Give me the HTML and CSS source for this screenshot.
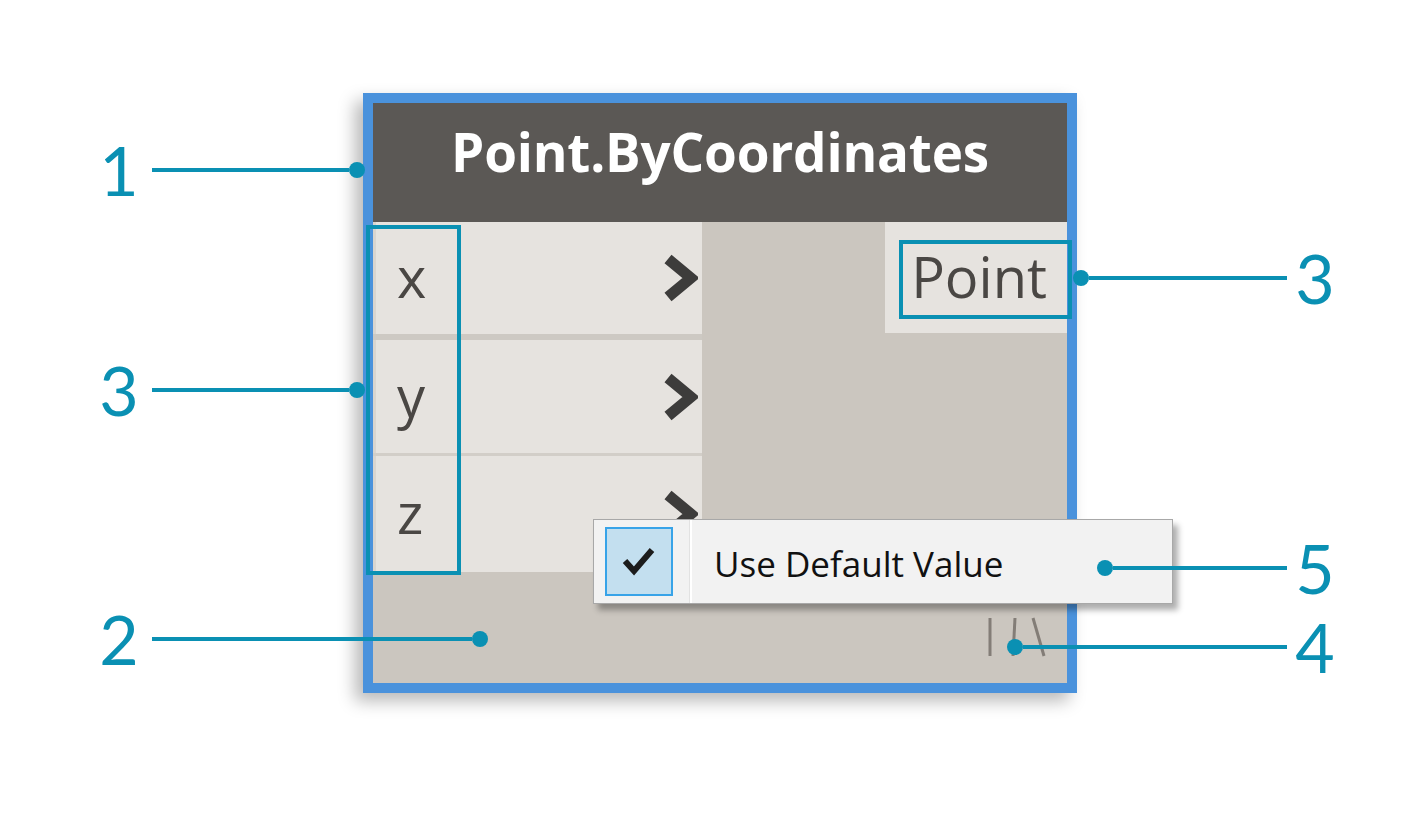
FILE: index.html
```html
<!DOCTYPE html>
<html>
<head>
<meta charset="utf-8">
<link rel="stylesheet" href="styles.css">
</head>
<body>
<div class="stage">
  <div class="node">
    <div class="node-header">Point.ByCoordinates</div>
    <div class="node-body">
      <div class="inputs">
        <div class="port in row-x"><span class="pname">x</span><svg class="chev" viewBox="0 0 36 48" width="36" height="48"><polyline points="6,5 29,24 6,43"/></svg></div>
        <div class="sep thick"></div>
        <div class="port in row-y"><span class="pname">y</span><svg class="chev" viewBox="0 0 36 48" width="36" height="48"><polyline points="6,5 29,24 6,43"/></svg></div>
        <div class="sep thin"></div>
        <div class="port in row-z"><span class="pname">z</span><svg class="chev" viewBox="0 0 36 48" width="36" height="48"><polyline points="6,5 29,24 6,43"/></svg></div>
      </div>
      <div class="outputs">
        <div class="port out"><span class="pname">Point</span></div>
      </div>
    </div>
    <div class="node-footer">
      <svg class="lacing" viewBox="0 0 64 44" width="64" height="44">
        <line x1="6" y1="2" x2="6" y2="40"/>
        <line x1="31" y1="2" x2="29" y2="40"/>
        <line x1="49" y1="2" x2="60" y2="40"/>
      </svg>
    </div>
  </div>

  <div class="menu">
    <div class="check">
      <svg viewBox="0 0 34 30" width="34" height="30"><polyline points="3,14 12,24 30,3"/></svg>
    </div>
    <div class="menu-sep"></div>
    <div class="menu-label">Use Default Value</div>
  </div>

  <div class="hl hl-inputs"></div>
  <div class="hl hl-output"></div>

  <div class="callout left c1"><span class="num">1</span><span class="line"></span><span class="dot"></span></div>
  <div class="callout left c3l"><span class="num">3</span><span class="line"></span><span class="dot"></span></div>
  <div class="callout left c2"><span class="num">2</span><span class="line"></span><span class="dot"></span></div>
  <div class="callout right c3r"><span class="dot"></span><span class="line"></span><span class="num">3</span></div>
  <div class="callout right c5"><span class="dot"></span><span class="line"></span><span class="num">5</span></div>
  <div class="callout right c4"><span class="dot"></span><span class="line"></span><span class="num">4</span></div>
</div>
</body>
</html>
```

FILE: styles.css
```css
html, body {
  margin: 0;
  padding: 0;
  background: #ffffff;
}

.stage {
  position: relative;
  width: 1428px;
  height: 820px;
  padding: 93px 0 0 363px;
  box-sizing: border-box;
  overflow: hidden;
  font-family: "Open Sans", "Noto Sans", sans-serif;
}

/* ---------- node ---------- */
.node {
  width: 714px;
  height: 600px;
  box-sizing: border-box;
  border: 10px solid #4a92dc;
  display: flex;
  flex-direction: column;
  background: #cbc6bf;
  box-shadow: -8px 8px 16px rgba(0, 0, 0, 0.28);
}

.node-header {
  height: 119px;
  flex: none;
  background: #5b5855;
  color: #ffffff;
  font-weight: 700;
  font-size: 53px;
  line-height: 97px;
  text-align: center;
  letter-spacing: -0.2px;
}

.node-body {
  height: 350px;
  flex: none;
  display: flex;
}

.inputs {
  width: 329px;
  display: flex;
  flex-direction: column;
}

.port {
  display: flex;
  align-items: center;
  color: #4a4744;
  font-size: 56px;
  box-sizing: border-box;
  background: #e6e3df;
}

.port.in {
  justify-content: space-between;
  padding: 0 4px 4px 21px;
  border-left: 3px solid #d9d5cf;
}

.row-x { height: 112px; }
.row-y { height: 113px; }
.row-z { height: 116px; }

.sep.thick { height: 6px; background: #cdc9c3; }
.sep.thin { height: 3px; background: #d2cec8; }

.chev {
  display: block;
  margin-top: 4px;
}
.chev polyline {
  fill: none;
  stroke: #3d3c3b;
  stroke-width: 11;
  stroke-linejoin: miter;
}

.outputs {
  flex: 1;
  display: flex;
  flex-direction: column;
  align-items: flex-end;
}

.port.out {
  width: 182px;
  height: 111px;
  justify-content: flex-end;
  padding: 0 20px 4px 0;
}

.node-footer {
  flex: 1;
  display: flex;
  justify-content: flex-end;
  align-items: flex-start;
  padding: 44px 19px 0 0;
}

.lacing line {
  stroke: #837d77;
  stroke-width: 3;
}

/* ---------- context menu ---------- */
.menu {
  position: absolute;
  left: 593px;
  top: 519px;
  width: 580px;
  height: 85px;
  box-sizing: border-box;
  background: #f2f2f2;
  border: 1px solid #a8a8a8;
  box-shadow: 5px 6px 6px rgba(0, 0, 0, 0.32);
  display: flex;
  align-items: center;
  padding-left: 11px;
}

.check {
  width: 68px;
  height: 69px;
  box-sizing: border-box;
  border: 2px solid #37a3e8;
  background: #c3dfef;
  display: flex;
  align-items: center;
  justify-content: center;
}
.check polyline {
  fill: none;
  stroke: #1c1c1c;
  stroke-width: 6;
}

.menu-sep {
  width: 2px;
  height: 100%;
  margin-left: 16px;
  background: #ffffff;
  border-left: 1px solid #e2e2e2;
}

.menu-label {
  margin-left: 22px;
  font-size: 35px;
  color: #111111;
  padding-top: 4px;
}

/* ---------- annotation highlights ---------- */
.hl {
  position: absolute;
  box-sizing: border-box;
  border: 4px solid #0a90b3;
}
.hl-inputs {
  left: 366px;
  top: 225px;
  width: 95px;
  height: 350px;
}
.hl-output {
  left: 899px;
  top: 240px;
  width: 173px;
  height: 79px;
}

/* ---------- callouts ---------- */
.callout {
  position: absolute;
  height: 70px;
  display: flex;
  align-items: center;
  color: #0a90b3;
  font-family: "Lato", "Open Sans", sans-serif;
  font-size: 68px;
  line-height: 70px;
}
.callout .num {
  width: 52px;
  text-align: center;
}
.callout .line {
  height: 4px;
  background: #0a90b3;
}
.callout .dot {
  width: 16px;
  height: 16px;
  border-radius: 50%;
  background: #0a90b3;
  flex: none;
}

.callout.left { left: 93px; }
.callout.left .line { margin-left: 7px; }
.c1 { top: 135px; }
.c1 .line { width: 197px; }
.c3l { top: 355px; }
.c3l .line { width: 197px; }
.c2 { top: 604px; }
.c2 .line { width: 320px; }

.callout.right .num { margin-left: 2px; }
.c3r { top: 243px; left: 1073px; }
.c3r .line { width: 198px; }
.c5 { top: 533px; left: 1097px; }
.c5 .line { width: 174px; }
.c4 { top: 612px; left: 1007px; }
.c4 .line { width: 264px; }
```
